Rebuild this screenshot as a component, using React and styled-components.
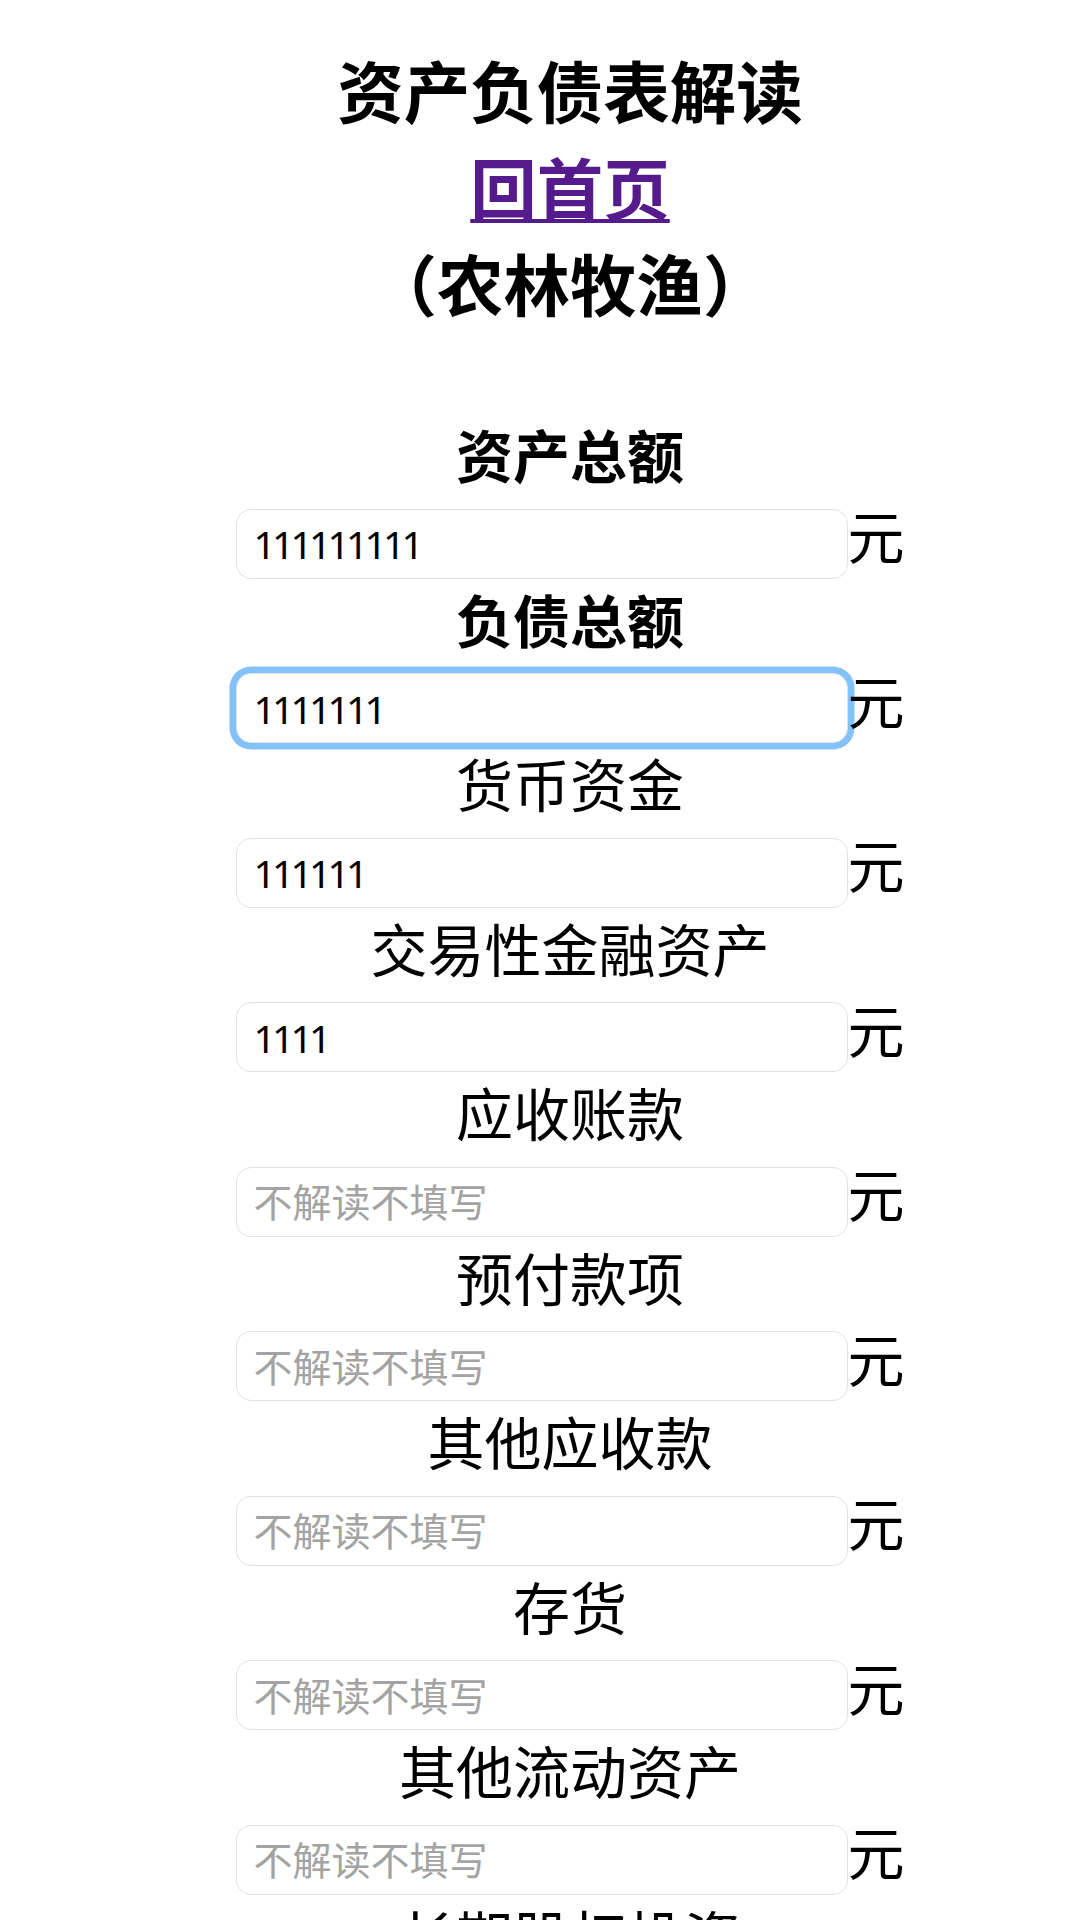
import React from 'react';
import styled, { createGlobalStyle, css } from 'styled-components';

const GlobalStyle = createGlobalStyle`
  html, body {
    margin: 0;
    padding: 0;
    background: #fff;
  }
  body {
    font-family: "Noto Sans CJK SC", sans-serif;
    color: #000;
  }
`;

const Page = styled.div`
  width: 1080px;
  box-sizing: border-box;
  padding: 41px 0 0 60px;
  text-align: center;
`;

const Header = styled.header`
  margin-bottom: 83.5px;
  font-size: 66.5px;
  line-height: 96.5px;
  font-weight: 700;
`;

const HeadLine = styled.div``;

const HomeLink = styled.a`
  color: #551a8b;
  text-decoration: underline;
  text-decoration-thickness: 4px;
  text-underline-offset: 4px;
`;

const Form = styled.form`
  display: flex;
  flex-direction: column;
  align-items: center;
`;

const Label = styled.label`
  display: block;
  padding: 1px 0 17.5px;
  font-size: 57px;
  line-height: 76px;
  font-weight: ${p => (p.$bold ? 700 : 400)};
`;

const Row = styled.div`
  display: flex;
  align-items: baseline;
  height: 70px;
`;

const Input = styled.input`
  box-sizing: border-box;
  width: 612px;
  height: 70px;
  margin: 0;
  padding: 0 17px;
  border: 1.5px solid #e2e2e2;
  border-radius: 15px;
  background: #fff;
  font-family: "Noto Sans", "Noto Sans CJK SC", sans-serif;
  font-size: 39px;
  letter-spacing: -3.8px;
  color: #000;
  outline: none;

  &::placeholder {
    color: #a3a3a3;
    font-family: "Noto Sans CJK SC", sans-serif;
    letter-spacing: 0;
  }

  ${p => p.$focused && css`
    box-shadow: 0 0 0 6.5px #82c1fa;
  `}
`;

const Unit = styled.span`
  font-size: 57px;
  line-height: 50px;
`;

const fields = [
  { label: '资产总额', bold: true, value: '111111111' },
  { label: '负债总额', bold: true, value: '1111111', focused: true },
  { label: '货币资金', value: '111111' },
  { label: '交易性金融资产', value: '1111' },
  { label: '应收账款' },
  { label: '预付款项' },
  { label: '其他应收款' },
  { label: '存货' },
  { label: '其他流动资产' },
  { label: '长期股权投资' },
  { label: '固定资产' },
  { label: '在建工程' },
  { label: '无形资产' },
];

export default function App() {
  return (
    <Page>
      <GlobalStyle />
      <Header>
        <HeadLine>资产负债表解读</HeadLine>
        <HeadLine><HomeLink href="#">回首页</HomeLink></HeadLine>
        <HeadLine>（农林牧渔）</HeadLine>
      </Header>
      <Form onSubmit={e => e.preventDefault()}>
        {fields.map((f, i) => (
          <React.Fragment key={f.label}>
            <Label htmlFor={`f${i}`} $bold={f.bold}>{f.label}</Label>
            <Row>
              <Input
                id={`f${i}`}
                type="text"
                defaultValue={f.value}
                placeholder="不解读不填写"
                $focused={f.focused}
              />
              <Unit>元</Unit>
            </Row>
          </React.Fragment>
        ))}
      </Form>
    </Page>
  );
}
